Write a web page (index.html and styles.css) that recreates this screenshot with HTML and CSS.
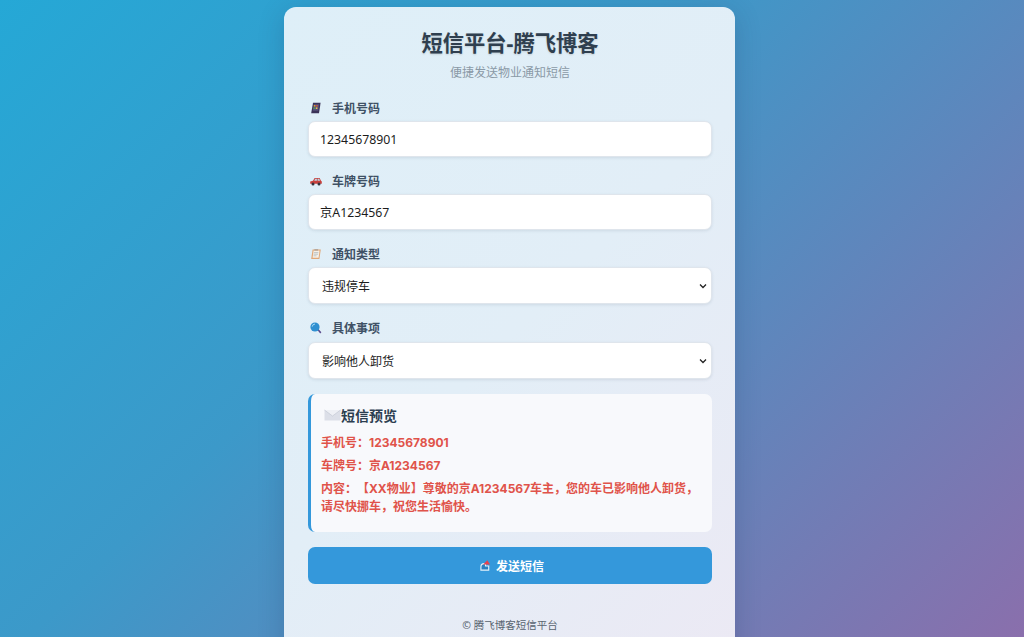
FILE: index.html
```html
<!DOCTYPE html>
<html lang="zh-CN">
<head>
<meta charset="utf-8">
<title>短信平台-腾飞博客</title>
<link rel="stylesheet" href="styles.css">
</head>
<body>
<main class="card">
  <h1 class="title">短信平台-腾飞博客</h1>
  <p class="subtitle">便捷发送物业通知短信</p>
  <div class="field">
    <label class="label">
      <svg class="icon" viewBox="0 0 12 12"><path d="M3 .8h7.600L9 11.200H1.200z" fill="#3b3358"/><path d="M3.800 2.200h5.300l-.9 6.600H2.900z" fill="#57507a"/><rect x="3.800" y="3" width="1.600" height="1.600" fill="#e0a030"/><rect x="6.200" y="3" width="1.600" height="1.600" fill="#d0503c"/><rect x="3.400" y="5.400" width="1.600" height="1.600" fill="#4a9a5a"/><rect x="5.800" y="5.400" width="1.600" height="1.600" fill="#e6c24a"/></svg>
      手机号码</label>
    <input class="control" type="text" value="12345678901">
  </div>
  <div class="field">
    <label class="label">
      <svg class="icon" viewBox="0 0 12 12"><path d="M.2 8.800V6.600l2.800-.8L4.600 3h5l1.400 2.800.8.600v2.400z" fill="#c8403c"/><path d="M5.200 3.800h1.700v2H4.200zM7.600 3.800h1.600l.9 2H7.600z" fill="#bcd3e2"/><circle cx="3" cy="9" r="1.500" fill="#35323c"/><circle cx="9" cy="9" r="1.500" fill="#35323c"/></svg>
      车牌号码</label>
    <input class="control" type="text" value="京A1234567">
  </div>
  <div class="field field-select">
    <label class="label">
      <svg class="icon" viewBox="0 0 12 12"><path d="M2.600 1.400h8.200L9.400 11H1.200z" fill="#e0a878"/><path d="M3.600 2.600h6l-1 7.200h-6z" fill="#f6f1e8"/><path d="M4.400 1h3.800l-.2 1.800H4.200z" fill="#b9a89a"/><path d="M3.900 4.600h4.400M3.700 6.200h4.400M3.500 7.800h3" stroke="#9aa7b4" stroke-width=".6"/></svg>
      通知类型</label>
    <select class="control select"><option>违规停车</option></select>
  </div>
  <div class="field field-select field-last">
    <label class="label">
      <svg class="icon" viewBox="0 0 12 12"><path d="M7 7.400l1-1 3.400 3.800-1.200 1.200z" fill="#5a4a8c"/><circle cx="5" cy="5" r="4.600" fill="#2f8fd0"/><path d="M2.200 4.600A3 3 0 0 1 5 2" stroke="#a9dcf5" stroke-width="1" fill="none"/></svg>
      具体事项</label>
    <select class="control select"><option>影响他人卸货</option></select>
  </div>
  <section class="preview">
    <h2 class="preview-title"><svg class="mail" viewBox="0 0 17 12"><path d="M.5 1h16v10.500H.5z" fill="#dcdfe8"/><path d="M.5 1l8 6 8-6" fill="#eef0f5" stroke="#c4c8d4" stroke-width=".7"/></svg>短信预览</h2>
    <p class="preview-line">手机号：12345678901</p>
    <p class="preview-line">车牌号：京A1234567</p>
    <p class="preview-line preview-body">内容：【XX物业】尊敬的京A1234567车主，您的车已影响他人卸货，请尽快挪车，祝您生活愉快。</p>
  </section>
  <button class="send" type="button"><svg class="send-icon" viewBox="0 0 12 12"><path d="M1 11V7.500Q1 4 4.500 4H6V6.500H9.500V11z" fill="#2a7fc0" stroke="#e4f1fa" stroke-width="1.200"/><path d="M3.500 5L8 0.300 11 5z" fill="#e8404c"/></svg>发送短信</button>
  <p class="footer">© 腾飞博客短信平台</p>
</main>
</body>
</html>
```
FILE: styles.css
```css
* { box-sizing: border-box; }
html, body { height: 100%; }
body {
  margin: 0;
  padding-right: 5px;
  height: 637px;
  overflow: hidden;
  display: flex;
  justify-content: center;
  align-items: flex-start;
  background: linear-gradient(135deg, #25a8d6 0%, #3c99c9 40%, #8a6fac 100%);
  font-family: "Noto Sans", "Noto Sans CJK SC", sans-serif;
  color: #2c3e50;
}
.card {
  width: 451px;
  margin-top: 7px;
  padding: 21px 23px 0 24px;
  height: 660px;
  flex: none;
  border-radius: 12px;
  background: linear-gradient(135deg, #deeff8 0%, #e2eef7 50%, #ece9f4 100%);
  box-shadow: 0 6px 26px rgba(30, 50, 90, 0.22);
}
.title {
  margin: 0;
  font-size: 21.300px;
  line-height: 30px;
  font-weight: 700;
  text-align: center;
  color: #2f3f4f;
  text-shadow: 0 1px 2px rgba(0, 0, 0, 0.14);
}
.subtitle {
  margin: 6px 0 0;
  font-size: 12px;
  line-height: 18px;
  text-align: center;
  color: #8a99a6;
}
.field { margin-top: 18px; margin-bottom: 16px; }
.field + .field { margin-top: 0; }
.field-last { margin-bottom: 15px; }
.label {
  display: flex;
  align-items: center;
  height: 16px;
  margin-bottom: 5px;
  padding-left: 2px;
  font-size: 12px;
  font-weight: 700;
  color: #3f5165;
}
.field-last .label { margin-bottom: 6px; }
.icon { width: 12px; height: 12px; margin-right: 10px; flex: none; }
.control {
  display: block;
  width: 100%;
  height: 36px;
  padding: 0 11px;
  font: 12.300px "Noto Sans", "Noto Sans CJK SC", sans-serif;
  color: #1c1c1c;
  background: #fff;
  border: 1px solid #dfe5ec;
  border-radius: 7px;
  box-shadow: 0 1px 3px rgba(60, 80, 110, 0.12);
}
.select {
  height: 37px;
  padding: 1px 13px 0;
  font-size: 12px;
  appearance: none;
  background: #fff url("data:image/svg+xml,%3Csvg xmlns='http://www.w3.org/2000/svg' viewBox='0 0 8 6'%3E%3Cpath d='M1 1.500l3 3 3-3' fill='none' stroke='%23222' stroke-width='1.300'/%3E%3C/svg%3E") no-repeat right 4px center / 8px 6px;
}
.preview {
  height: 138px;
  padding: 11px 12px 0 10px;
  background: #f8f9fc;
  border-left: 3px solid #3498db;
  border-radius: 7px;
}
.preview-title {
  display: flex;
  align-items: center;
  margin: 0 0 9px;
  padding-left: 3px;
  height: 20px;
  font-size: 14px;
  font-weight: 700;
  color: #2c3e50;
}
.mail { width: 17px; height: 12px; flex: none; }
.preview-line {
  margin: 0 0 5px;
  font-family: "Inter", "Noto Sans CJK SC", sans-serif;
  font-size: 12px;
  line-height: 18px;
  font-weight: 700;
  color: #e0534a;
  text-spacing-trim: space-all;
}
.send {
  display: flex;
  align-items: center;
  justify-content: center;
  width: 100%;
  height: 37px;
  margin-top: 15px;
  padding: 0 0 0 4px;
  border: 0;
  border-radius: 7px;
  background: #3498db;
  color: #fff;
  font: 700 12px "Noto Sans", "Noto Sans CJK SC", sans-serif;
}
.send-icon { width: 11px; height: 11px; margin-right: 5px; }
.footer {
  margin: 33px 0 0;
  font-size: 10.500px;
  line-height: 16px;
  text-align: center;
  color: #58636f;
}
```
